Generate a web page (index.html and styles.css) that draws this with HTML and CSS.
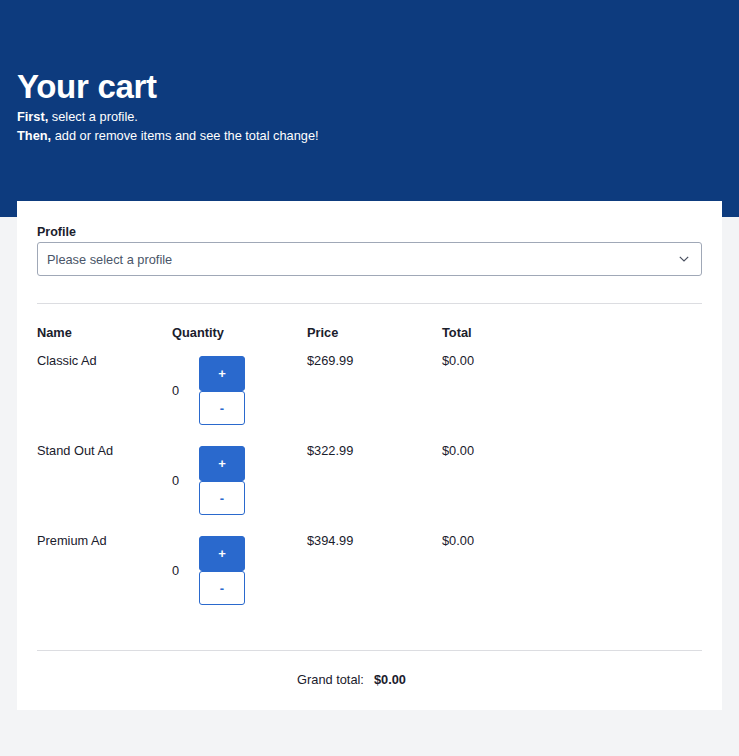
FILE: index.html
```html
<!DOCTYPE html>
<html lang="en">
<head>
<meta charset="utf-8">
<title>Your cart</title>
<link rel="stylesheet" href="styles.css">
</head>
<body>
<header class="hero">
  <h1 class="hero-title">Your cart</h1>
  <p class="hero-line"><strong>First,</strong> select a profile.</p>
  <p class="hero-line"><strong>Then,</strong> add or remove items and see the total change!</p>
</header>
<main class="card">
  <label class="field-label" for="profile">Profile</label>
  <div class="select">
    <span class="select-text">Please select a profile</span>
    <svg class="chevron" width="10" height="6" viewBox="0 0 10 6"><path d="M0.8 0.8 L5 5 L9.2 0.8" fill="none" stroke="#4a5060" stroke-width="1.2"/></svg>
  </div>
  <hr class="divider divider-top">
  <div class="cart">
    <div class="cart-row cart-head">
      <div>Name</div><div>Quantity</div><div>Price</div><div>Total</div>
    </div>
    <div class="cart-row item">
      <div>Classic Ad</div>
      <div class="qty"><span class="qty-num">0</span><div class="stepper"><button class="btn btn-plus">+</button><button class="btn btn-minus">-</button></div></div>
      <div>$269.99</div>
      <div>$0.00</div>
    </div>
    <div class="cart-row item">
      <div>Stand Out Ad</div>
      <div class="qty"><span class="qty-num">0</span><div class="stepper"><button class="btn btn-plus">+</button><button class="btn btn-minus">-</button></div></div>
      <div>$322.99</div>
      <div>$0.00</div>
    </div>
    <div class="cart-row item">
      <div>Premium Ad</div>
      <div class="qty"><span class="qty-num">0</span><div class="stepper"><button class="btn btn-plus">+</button><button class="btn btn-minus">-</button></div></div>
      <div>$394.99</div>
      <div>$0.00</div>
    </div>
  </div>
  <hr class="divider divider-bottom">
  <div class="grand">
    <span>Grand total:</span><strong>$0.00</strong>
  </div>
</main>
</body>
</html>
```
FILE: styles.css
```css
* { box-sizing: border-box; }
html, body {
  margin: 0;
  padding: 0;
  background: #f3f4f6;
  font-family: "Liberation Sans", Arial, sans-serif;
  color: #1a202c;
}
.hero {
  background: #0d3b7e;
  color: #fff;
  height: 217px;
  padding: 69px 17px 0;
}
.hero-title {
  margin: 0 0 2px;
  font-size: 33px;
  line-height: 36px;
  font-weight: 700;
  letter-spacing: -0.3px;
}
.hero-line {
  margin: 0;
  font-size: 12.8px;
  line-height: 19px;
}
.card {
  background: #fff;
  margin: -16px 17px 0;
  padding: 23px 20px 22px;
}
.field-label {
  display: block;
  font-size: 12.5px;
  font-weight: 700;
  line-height: 16px;
  margin-bottom: 2px;
}
.select {
  height: 34px;
  border: 1px solid #a0a8b7;
  border-radius: 3px;
  display: flex;
  align-items: center;
  justify-content: space-between;
  padding: 0 12px 0 9px;
}
.select-text {
  font-size: 12.8px;
  color: #4a5568;
}
.divider {
  border: 0;
  border-top: 1px solid #dcdde1;
  margin: 0;
}
.divider-top { margin-top: 27px; }
.divider-bottom { margin-top: 45px; }
.cart { margin-top: 21px; font-size: 12.8px; }
.cart-row {
  display: grid;
  grid-template-columns: 135px 135px 135px 135px;
  line-height: 16px;
}
.cart-head {
  font-weight: 700;
  margin-bottom: 12px;
}
.item { padding-bottom: 18px; }
.item:last-child { padding-bottom: 0; }
.qty {
  display: flex;
  align-items: center;
  margin-top: 3px;
}
.qty-num { width: 27px; }
.stepper {
  display: flex;
  flex-direction: column;
  width: 46px;
}
.btn {
  font-family: inherit;
  font-size: 13px;
  border-radius: 3px;
  padding: 0;
  cursor: pointer;
  font-weight: 700;
}
.btn-plus {
  height: 35px;
  background: #2a69cd;
  border: 1px solid #2a69cd;
  color: #fff;
}
.btn-minus {
  height: 34px;
  background: #fff;
  border: 1.5px solid #2a69cd;
  color: #2a69cd;
}
.grand {
  margin-top: 21px;
  display: flex;
  justify-content: center;
  gap: 10px;
  padding-right: 36px;
  font-size: 12.8px;
  line-height: 16px;
}
```
